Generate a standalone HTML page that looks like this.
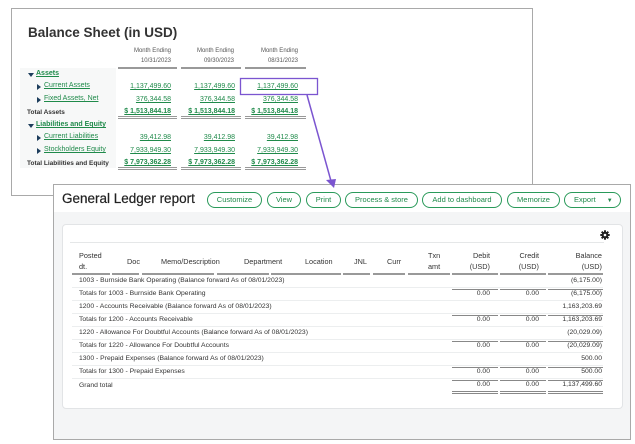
<!DOCTYPE html>
<html><head><meta charset="utf-8"><style>
*{margin:0;padding:0;box-sizing:border-box}
body{width:635px;height:444px;background:#fff;position:relative;overflow:hidden;font-family:"Liberation Sans",Arial,sans-serif;color:#222}
.a{position:absolute;white-space:nowrap}
#bs{left:11px;top:8px;width:522px;height:188px;border:1px solid #a9a9a9;background:#fff}
.bt{font-size:13.5px;font-weight:bold;color:#333}
.mh{font-size:6px;color:#555;text-align:right;width:60px}
.lk{font-size:7px;color:#1f8a4a;text-decoration:underline}
.num{font-size:7px;color:#1f8a4a;text-decoration:underline;text-align:right;width:62px}
.bn{font-weight:bold}
.tl{font-size:6.5px;font-weight:bold;color:#333}
.ul{height:2px;background:#999}
.dul{height:3px;border-top:1px solid #999;border-bottom:1px solid #999}
.tri{width:0;height:0;border-left:4px solid #1d3d5c;border-top:3px solid transparent;border-bottom:3px solid transparent}
.trd{width:0;height:0;border-top:4px solid #1d3d5c;border-left:3px solid transparent;border-right:3px solid transparent}
.rowbg{background:#f7f8f8}
#gl{left:53px;top:184px;width:578px;height:256px;border:1px solid #a9a9a9;background:#f4f5f6}
#hdr{position:absolute;left:0;top:0;width:576px;height:27px;background:#fff}
.btn{position:absolute;top:7px;height:16px;border:1.5px solid #2a9a5a;border-radius:9px;font-size:7.5px;color:#1f8a4a;text-align:center;line-height:13px}
#card{position:absolute;left:8px;top:39px;width:561px;height:185px;background:#fff;border:1px solid #e2e4e6;border-radius:4px}
.th{font-size:7.3px;color:#333;line-height:11px}
.td{font-size:6.8px;color:#333}
.r{text-align:right}
</style></head><body>
<div class="a" id="bs"></div>
<div class="a bt" style="left:28px;top:25px">Balance Sheet (in USD)</div>
<div class="a mh" style="left:111px;top:48px">Month Ending</div>
<div class="a mh" style="left:111px;top:58px">10/31/2023</div>
<div class="a mh" style="left:174px;top:48px">Month Ending</div>
<div class="a mh" style="left:174px;top:58px">09/30/2023</div>
<div class="a mh" style="left:238px;top:48px">Month Ending</div>
<div class="a mh" style="left:238px;top:58px">08/31/2023</div>
<div class="a ul" style="left:118px;top:67px;width:59px"></div>
<div class="a ul" style="left:181px;top:67px;width:60px"></div>
<div class="a ul" style="left:245px;top:67px;width:61px"></div>
<div class="a rowbg" style="left:20px;top:68px;width:96px;height:100px"></div>
<div class="a trd" style="left:28px;top:73px"></div>
<div class="a lk bn" style="left:36px;top:70px">Assets</div>
<div class="a tri" style="left:37px;top:84px"></div>
<div class="a lk" style="left:44px;top:82px">Current Assets</div>
<div class="a num" style="left:109px;top:83px">1,137,499.60</div>
<div class="a num" style="left:173px;top:83px">1,137,499.60</div>
<div class="a num" style="left:236px;top:83px">1,137,499.60</div>
<div class="a tri" style="left:37px;top:97px"></div>
<div class="a lk" style="left:44px;top:95px">Fixed Assets, Net</div>
<div class="a num" style="left:109px;top:96px">376,344.58</div>
<div class="a num" style="left:173px;top:96px">376,344.58</div>
<div class="a num" style="left:236px;top:96px">376,344.58</div>
<div class="a tl" style="left:27px;top:109px">Total Assets</div>
<div class="a num bn" style="left:109px;top:108px">$ 1,513,844.18</div>
<div class="a num bn" style="left:173px;top:108px">$ 1,513,844.18</div>
<div class="a num bn" style="left:236px;top:108px">$ 1,513,844.18</div>
<div class="a dul" style="left:118px;top:116px;width:59px"></div>
<div class="a dul" style="left:181px;top:116px;width:60px"></div>
<div class="a dul" style="left:245px;top:116px;width:61px"></div>
<div class="a trd" style="left:28px;top:124px"></div>
<div class="a lk bn" style="left:36px;top:121px">Liabilities and Equity</div>
<div class="a tri" style="left:37px;top:135px"></div>
<div class="a lk" style="left:44px;top:133px">Current Liabilities</div>
<div class="a num" style="left:109px;top:134px">39,412.98</div>
<div class="a num" style="left:173px;top:134px">39,412.98</div>
<div class="a num" style="left:236px;top:134px">39,412.98</div>
<div class="a tri" style="left:37px;top:148px"></div>
<div class="a lk" style="left:44px;top:146px">Stockholders Equity</div>
<div class="a num" style="left:109px;top:147px">7,933,949.30</div>
<div class="a num" style="left:173px;top:147px">7,933,949.30</div>
<div class="a num" style="left:236px;top:147px">7,933,949.30</div>
<div class="a tl" style="left:27px;top:160px">Total Liabilities and Equity</div>
<div class="a num bn" style="left:109px;top:159px">$ 7,973,362.28</div>
<div class="a num bn" style="left:173px;top:159px">$ 7,973,362.28</div>
<div class="a num bn" style="left:236px;top:159px">$ 7,973,362.28</div>
<div class="a dul" style="left:118px;top:167px;width:59px"></div>
<div class="a dul" style="left:181px;top:167px;width:60px"></div>
<div class="a dul" style="left:245px;top:167px;width:61px"></div>

<div class="a" id="gl">
<div id="hdr"></div>
<div class="a" style="left:8px;top:6px;font-size:13.5px;color:#222;-webkit-text-stroke:0.2px #222">General Ledger report</div>
<div class="btn" style="left:153px;width:55px">Customize</div>
<div class="btn" style="left:213px;width:34px">View</div>
<div class="btn" style="left:252px;width:35px">Print</div>
<div class="btn" style="left:291px;width:73px">Process &amp; store</div>
<div class="btn" style="left:368px;width:80px">Add to dashboard</div>
<div class="btn" style="left:453px;width:53px">Memorize</div>
<div class="btn" style="left:510px;width:57px;text-align:left;padding-left:9px">Export <span style="font-size:6px;margin-left:9px">▼</span></div>
<div id="card"></div>
</div>
<svg class="a" style="left:600px;top:230px" width="10" height="10" viewBox="0 0 10 10">
<g fill="#222"><circle cx="5" cy="5" r="3.3"/>
<rect x="4" y="0.3" width="2" height="9.4"/><rect x="0.3" y="4" width="9.4" height="2"/>
<rect x="4" y="0.3" width="2" height="9.4" transform="rotate(45 5 5)"/><rect x="4" y="0.3" width="2" height="9.4" transform="rotate(-45 5 5)"/></g>
<circle cx="5" cy="5" r="1.3" fill="#fff"/></svg>
<div class="a" style="left:70px;top:242px;width:534px;height:1px;background:#e5e7e8"></div>
<div class="a th" style="left:79px;top:250px">Posted<br>dt.</div>
<div class="a th" style="left:127px;top:256px">Doc</div>
<div class="a th" style="left:161px;top:256px">Memo/Description</div>
<div class="a th" style="left:244px;top:256px">Department</div>
<div class="a th" style="left:305px;top:256px">Location</div>
<div class="a th" style="left:354px;top:256px">JNL</div>
<div class="a th" style="left:387px;top:256px">Curr</div>
<div class="a th" style="left:428px;top:250px;text-align:center">Txn<br>amt</div>
<div class="a th r" style="left:452px;top:250px;width:38px">Debit<br>(USD)</div>
<div class="a th r" style="left:500px;top:250px;width:39px">Credit<br>(USD)</div>
<div class="a th r" style="left:548px;top:250px;width:54px">Balance<br>(USD)</div>
<div class="a ul" style="left:72px;top:273px;width:38px"></div>
<div class="a ul" style="left:112px;top:273px;width:27px"></div>
<div class="a ul" style="left:142px;top:273px;width:72px"></div>
<div class="a ul" style="left:217px;top:273px;width:52px"></div>
<div class="a ul" style="left:271px;top:273px;width:70px"></div>
<div class="a ul" style="left:343px;top:273px;width:27px"></div>
<div class="a ul" style="left:373px;top:273px;width:32px"></div>
<div class="a ul" style="left:408px;top:273px;width:42px"></div>
<div class="a ul" style="left:452px;top:273px;width:46px"></div>
<div class="a ul" style="left:500px;top:273px;width:46px"></div>
<div class="a ul" style="left:548px;top:273px;width:55px"></div>

<div class="a td" style="left:79px;top:277px">1003 - Burnside Bank Operating (Balance forward As of 08/01/2023)</div>
<div class="a td r" style="left:548px;top:277px;width:54px">(6,175.00)</div>
<div class="a td" style="left:79px;top:290px">Totals for 1003 - Burnside Bank Operating</div>
<div class="a td r" style="left:452px;top:290px;width:38px">0.00</div>
<div class="a td r" style="left:500px;top:290px;width:39px">0.00</div>
<div class="a td r" style="left:548px;top:290px;width:54px">(6,175.00)</div>
<div class="a td" style="left:79px;top:303px">1200 - Accounts Receivable (Balance forward As of 08/01/2023)</div>
<div class="a td r" style="left:548px;top:303px;width:54px">1,163,203.69</div>
<div class="a td" style="left:79px;top:316px">Totals for 1200 - Accounts Receivable</div>
<div class="a td r" style="left:452px;top:316px;width:38px">0.00</div>
<div class="a td r" style="left:500px;top:316px;width:39px">0.00</div>
<div class="a td r" style="left:548px;top:316px;width:54px">1,163,203.69</div>
<div class="a td" style="left:79px;top:329px">1220 - Allowance For Doubtful Accounts (Balance forward As of 08/01/2023)</div>
<div class="a td r" style="left:548px;top:329px;width:54px">(20,029.09)</div>
<div class="a td" style="left:79px;top:342px">Totals for 1220 - Allowance For Doubtful Accounts</div>
<div class="a td r" style="left:452px;top:342px;width:38px">0.00</div>
<div class="a td r" style="left:500px;top:342px;width:39px">0.00</div>
<div class="a td r" style="left:548px;top:342px;width:54px">(20,029.09)</div>
<div class="a td" style="left:79px;top:355px">1300 - Prepaid Expenses (Balance forward As of 08/01/2023)</div>
<div class="a td r" style="left:548px;top:355px;width:54px">500.00</div>
<div class="a td" style="left:79px;top:368px">Totals for 1300 - Prepaid Expenses</div>
<div class="a td r" style="left:452px;top:368px;width:38px">0.00</div>
<div class="a td r" style="left:500px;top:368px;width:39px">0.00</div>
<div class="a td r" style="left:548px;top:368px;width:54px">500.00</div>
<div class="a td" style="left:79px;top:382px">Grand total</div>
<div class="a td r" style="left:452px;top:381px;width:38px">0.00</div>
<div class="a td r" style="left:500px;top:381px;width:39px">0.00</div>
<div class="a td r" style="left:548px;top:381px;width:54px">1,137,499.60</div>

<svg class="a" style="left:0;top:0" width="635" height="444">
<g stroke="#eceeef" stroke-width="1">
<line x1="72" y1="287.5" x2="603" y2="287.5"/><line x1="72" y1="300.5" x2="603" y2="300.5"/>
<line x1="72" y1="313.5" x2="603" y2="313.5"/><line x1="72" y1="326.5" x2="603" y2="326.5"/>
<line x1="72" y1="339.5" x2="603" y2="339.5"/><line x1="72" y1="352.5" x2="603" y2="352.5"/>
<line x1="72" y1="365.5" x2="603" y2="365.5"/><line x1="72" y1="378.5" x2="603" y2="378.5"/>
</g>
<g stroke="#888" stroke-width="1">
<path d="M452 289.5h46M500 289.5h46M548 289.5h55"/>
<path d="M452 315.5h46M500 315.5h46M548 315.5h55"/>
<path d="M452 341.5h46M500 341.5h46M548 341.5h55"/>
<path d="M452 367.5h46M500 367.5h46M548 367.5h55"/>
<path d="M452 380.5h46M500 380.5h46M548 380.5h55"/>
<path d="M452 391.5h46M500 391.5h46M548 391.5h55M452 393.5h46M500 393.5h46M548 393.5h55"/>
</g>
<rect x="240.5" y="78.5" width="77" height="16" fill="none" stroke="#7b55d0" stroke-width="1.3"/>
<line x1="307" y1="95" x2="331" y2="181" stroke="#7b55d0" stroke-width="1.5"/>
<polygon points="326,180 336,179 334,188" fill="#7b55d0"/>
</svg>
</body></html>
